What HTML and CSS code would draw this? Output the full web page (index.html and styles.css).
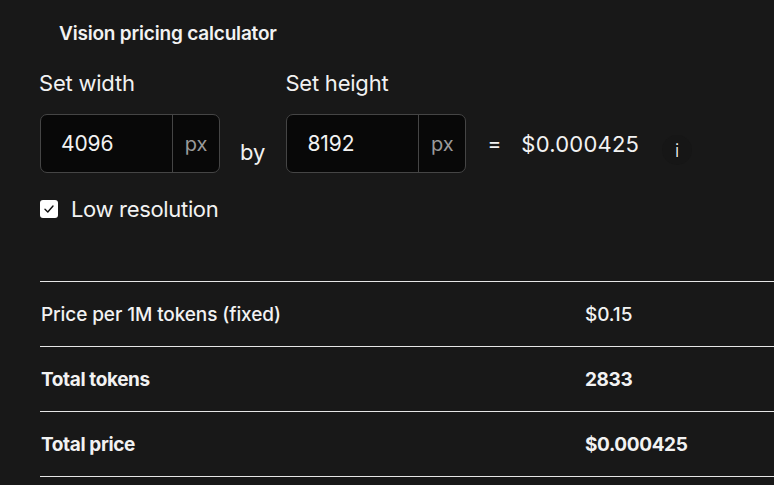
FILE: index.html
```html
<!DOCTYPE html>
<html lang="en">
<head>
<meta charset="utf-8">
<title>Vision pricing calculator</title>
<link rel="stylesheet" href="styles.css">
</head>
<body>
<div class="calc">
  <h2 class="title">Vision pricing calculator</h2>
  <div class="fields">
    <div class="group">
      <label class="label">Set width</label>
      <div class="box">
        <span class="num">4096</span>
        <span class="unit">px</span>
      </div>
    </div>
    <span class="by">by</span>
    <div class="group">
      <label class="label">Set height</label>
      <div class="box">
        <span class="num">8192</span>
        <span class="unit">px</span>
      </div>
    </div>
    <span class="eq">=</span>
    <span class="result">$0.000425</span>
    <span class="info">i</span>
  </div>
  <div class="check-row">
    <span class="checkbox">
      <svg width="12" height="12" viewBox="0 0 12 12"><path d="M2 6.3 L4.8 9 L10 3" fill="none" stroke="#111" stroke-width="1.4" stroke-linecap="round" stroke-linejoin="round"/></svg>
    </span>
    <span class="check-label">Low resolution</span>
  </div>
  <table class="table">
    <tr class="row">
      <td class="cell first regular">Price per 1M tokens (fixed)</td>
      <td class="cell regular">$0.15</td>
    </tr>
    <tr class="row">
      <td class="cell first">Total tokens</td>
      <td class="cell">2833</td>
    </tr>
    <tr class="row">
      <td class="cell first">Total price</td>
      <td class="cell">$0.000425</td>
    </tr>
  </table>
</div>
</body>
</html>
```

FILE: styles.css
```css
* { box-sizing: border-box; }
html, body {
  margin: 0;
  padding: 0;
  background: #181818;
  color: #f2f2f2;
  font-family: Inter, "Noto Sans", sans-serif;
  overflow: hidden;
}
.calc {
  padding: 22px 0 0 40px;
}
.title {
  margin: 0 0 0 19px;
  font-size: 19px;
  font-weight: 600;
  line-height: 24px;
  letter-spacing: -0.01em;
}
.fields {
  display: flex;
  align-items: flex-end;
  margin-top: 25px;
}
.group {
  display: flex;
  flex-direction: column;
}
.label {
  margin-left: -1px;
  font-size: 22px;
  line-height: 24px;
  letter-spacing: -0.01em;
  margin-bottom: 19px;
}
.box {
  display: flex;
  width: 180px;
  height: 59px;
  border: 1px solid #454545;
  border-radius: 7px;
  background: #080808;
  overflow: hidden;
}
.num {
  flex: 1;
  display: flex;
  align-items: center;
  padding-left: 20px;
  font-size: 21px;
  letter-spacing: -0.005em;
}
.unit {
  width: 47px;
  display: flex;
  align-items: center;
  justify-content: center;
  border-left: 1px solid #454545;
  color: #9a9a9a;
  font-size: 20px;
}
.by, .eq, .result {
  height: 59px;
  display: flex;
  align-items: center;
}
.by {
  font-size: 22px;
  margin: 0 21px 0 20px;
  padding-top: 16px;
}
.eq {
  font-size: 21px;
  margin: 0 20px 0 21px;
}
.result {
  font-size: 22px;
  letter-spacing: 0.01em;
}
.info {
  display: flex;
  align-items: center;
  justify-content: center;
  width: 30px;
  height: 30px;
  margin: 0 0 8px 23px;
  border-radius: 50%;
  background: #161616;
  font-size: 18px;
  font-weight: 300;
  color: #ffffff;
}
.check-row {
  display: flex;
  align-items: center;
  margin-top: 24px;
  height: 24px;
}
.checkbox {
  width: 18px;
  height: 18px;
  border-radius: 3px;
  background: #fff;
  display: flex;
  align-items: center;
  justify-content: center;
}
.check-label {
  margin-left: 13px;
  font-size: 22px;
  letter-spacing: -0.015em;
}
.table {
  margin-top: 60px;
  width: 760px;
  border-collapse: collapse;
  border-top: 1px solid #e6e6e6;
}
.row {
  height: 65px;
  border-bottom: 1px solid #e6e6e6;
}
.cell {
  padding: 0;
  font-size: 19px;
  font-weight: 700;
  letter-spacing: -0.02em;
  vertical-align: middle;
}
.cell.first {
  width: 545px;
  padding-left: 1px;
}
.cell.regular {
  font-weight: 500;
  letter-spacing: -0.005em;
}
```
